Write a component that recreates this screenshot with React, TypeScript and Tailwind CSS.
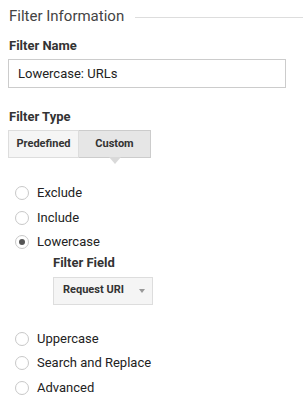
import React from "react";

function Radio({ label, checked }: { label: string; checked?: boolean }) {
  return (
    <div className="flex items-center h-[24.5px]">
      <span className="w-[14px] h-[14px] rounded-full border border-[#c8c8c8] bg-white flex items-center justify-center ml-[15px] shrink-0">
        {checked && <span className="w-[6px] h-[6px] rounded-full bg-[#555]" />}
      </span>
      <span className="ml-[8px] text-[13px] text-[#222] leading-[16px]">{label}</span>
    </div>
  );
}

export default function App() {
  return (
    <div className="w-[303px] h-[418px] bg-white overflow-hidden" style={{ fontFamily: "Roboto, 'Liberation Sans', sans-serif" }}>
      <div className="flex items-start pt-[6px] pl-[9px]">
        <span className="text-[15px] font-normal text-[#444] leading-[20px]">Filter Information</span>
        <div className="flex-1 h-px bg-[#ddd] ml-[11px] mt-[11px]" />
      </div>
      <div className="pl-[9px] mt-[12px] text-[13px] font-bold text-[#333] leading-[16px]">Filter Name</div>
      <div className="ml-[8px] mt-[5px] w-[278px] h-[29px] border border-[#ccc] flex items-center pl-[9px] text-[13px] text-[#222]">
        Lowercase: URLs
      </div>
      <div className="pl-[9px] mt-[21px] text-[13px] font-bold text-[#333] leading-[16px]">Filter Type</div>
      <div className="ml-[8px] mt-[5px] flex w-fit">
        <div className="w-[71px] h-[28px] border border-[#ddd] bg-[#f5f5f5] flex items-center justify-center text-[11px] font-bold text-[#333]">Predefined</div>
        <div className="w-[72px] h-[28px] border border-l-0 border-[#ccc] bg-[#e6e6e6] flex items-center justify-center text-[11px] font-bold text-[#333] relative">
          Custom
          <span className="absolute left-1/2 -translate-x-1/2 top-full w-0 h-0 border-l-[6px] border-r-[6px] border-t-[7px] border-l-transparent border-r-transparent border-t-[#d9d9d9]" />
        </div>
      </div>
      <div className="mt-[23px]">
        <Radio label="Exclude" />
        <Radio label="Include" />
        <Radio label="Lowercase" checked />
        <div className="pl-[53px] text-[13px] font-bold text-[#333] leading-[16px]">Filter Field</div>
        <div className="ml-[53px] mt-[6px] w-[100px] h-[28px] border border-[#ddd] bg-[#f5f5f5] flex items-center pl-[9px] text-[11px] font-bold text-[#333]">
          Request URI
          <span className="ml-[15px] w-0 h-0 border-l-[3px] border-r-[3px] border-t-[4px] border-l-transparent border-r-transparent border-t-[#999] mt-[1px]" />
        </div>
        <div className="mt-[22px]">
          <Radio label="Uppercase" />
          <Radio label="Search and Replace" />
          <Radio label="Advanced" />
        </div>
      </div>
    </div>
  );
}
